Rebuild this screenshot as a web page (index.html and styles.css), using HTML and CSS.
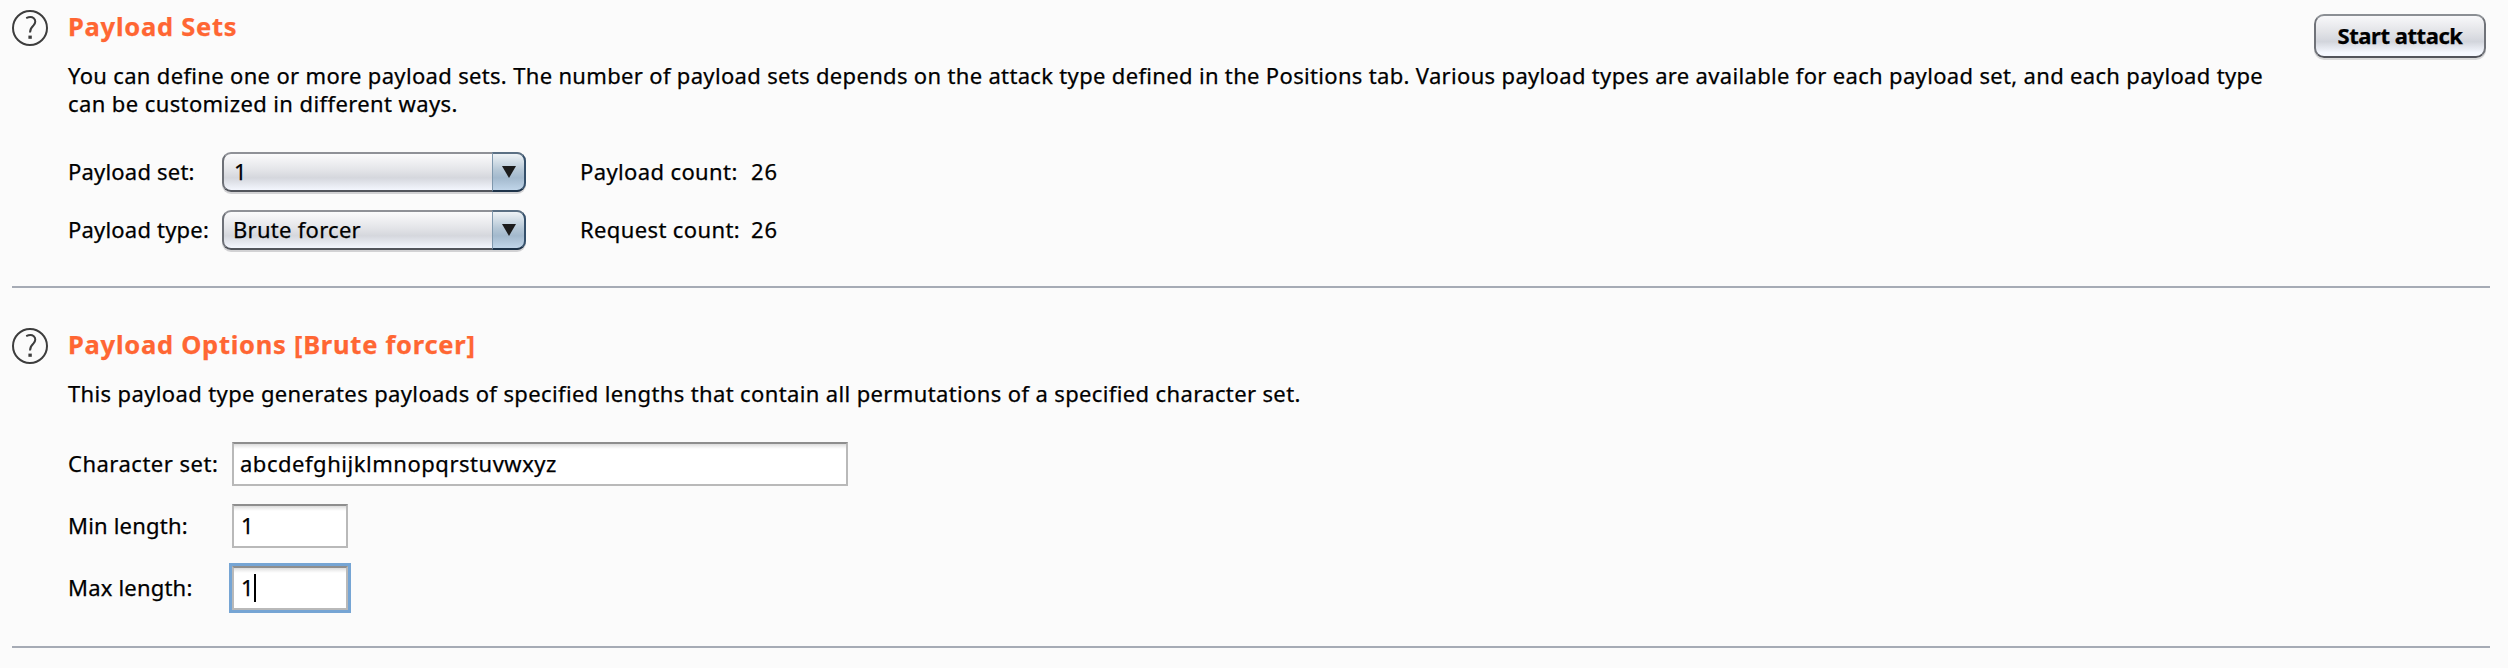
FILE: index.html
```html
<!DOCTYPE html>
<html lang="en">
<head>
<meta charset="utf-8">
<title>Payloads</title>
<link rel="stylesheet" href="styles.css">
</head>
<body>
<main class="panel">
  <section class="section">
    <svg class="help" viewBox="0 0 38 38">
      <circle cx="19" cy="19" r="17" />
      <path d="M15.2 9.2C18 7.8 21 7.8 22.8 9.2C25 11 24.6 14.3 22.6 16.3C20.4 18.4 19 19.8 19 23.6" />
      <rect x="17.4" y="26.6" width="3.4" height="3.2" />
    </svg>
    <div class="content">
      <h2 class="title">Payload Sets</h2>
      <p class="text"><span class="text-wide">You can define one or more payload sets. The number of payload sets depends on the attack type defined in the Positions tab. Various payload types are available for each payload set, and each payload type</span><br><span class="text-end">can be customized in different ways.</span></p>
      <div class="sets">
        <label class="label">Payload set:</label>
        <div class="combo"><span class="value value-digit">1</span><span class="arrow"><svg class="tri" viewBox="0 0 14 12"><path d="M0 0H14L7 12Z" /></svg></span></div>
        <span class="label count">Payload count:</span>
        <span class="label number">26</span>
        <label class="label">Payload type:</label>
        <div class="combo"><span class="value">Brute forcer</span><span class="arrow"><svg class="tri" viewBox="0 0 14 12"><path d="M0 0H14L7 12Z" /></svg></span></div>
        <span class="label count">Request count:</span>
        <span class="label number">26</span>
      </div>
    </div>
    <button class="attack">Start attack</button>
  </section>

  <section class="section">
    <svg class="help" viewBox="0 0 38 38">
      <circle cx="19" cy="19" r="17" />
      <path d="M15.2 9.2C18 7.8 21 7.8 22.8 9.2C25 11 24.6 14.3 22.6 16.3C20.4 18.4 19 19.8 19 23.6" />
      <rect x="17.4" y="26.6" width="3.4" height="3.2" />
    </svg>
    <div class="content">
      <h2 class="title">Payload Options [Brute forcer]</h2>
      <p class="text text-single">This payload type generates payloads of specified lengths that contain all permutations of a specified character set.</p>
      <div class="options">
        <label class="label label-chars">Character set:</label>
        <div class="field field-wide">abcdefghijklmnopqrstuvwxyz</div>
        <label class="label">Min length:</label>
        <div class="field">1</div>
        <label class="label">Max length:</label>
        <div class="field focused">1<i class="caret"></i></div>
      </div>
    </div>
  </section>
</main>
</body>
</html>
```
FILE: styles.css
```css
* { box-sizing: border-box; }

body {
  margin: 0;
  background: #fbfbfb;
  color: #000;
  font: 22px/28px "Noto Sans", sans-serif;
  -webkit-text-stroke-width: 0.25px;
}

.panel {
  height: 668px;
  padding: 0 18px 0 12px;
  overflow: hidden;
}

.section {
  display: flex;
  align-items: flex-start;
  height: 288px;
  padding-top: 8px;
  border-bottom: 2px solid #a6abb5;
}

.section + .section {
  height: 360px;
  padding-top: 38px;
}

.help {
  flex: none;
  width: 38px;
  height: 38px;
  margin: 1px 18px 0 -1px;
  fill: none;
  stroke: #3d3d3d;
  stroke-width: 2;
}

.help rect {
  fill: #3d3d3d;
  stroke: none;
}

.content {
  flex: 1;
  white-space: nowrap;
}

.title {
  margin: 0 0 0 1px;
  color: #ff6633;
  font-size: 25.5px;
  line-height: 36px;
  letter-spacing: 0.74px;
}

.text { margin: 17px 0 0 1px; }
.text-wide { letter-spacing: 0.33px; }
.text-end { letter-spacing: 0.4px; }
.text-single { letter-spacing: 0.37px; }

.sets {
  display: grid;
  grid-template-columns: 155px 357px 171px auto;
  grid-auto-rows: 40px;
  row-gap: 18px;
  margin-top: 35px;
}

.label {
  padding-left: 1px;
  line-height: 38px;
  letter-spacing: 0.2px;
}

.count { letter-spacing: 0.38px; }
.number { letter-spacing: 0.8px; }

.combo {
  display: flex;
  width: 304px;
  height: 40px;
  border: 2px solid;
  border-color: #8f9197 #6d7077 #52555c;
  border-right: 0;
  border-radius: 9px;
  background: linear-gradient(#fbfbfc, #e3e4e8 45%, #d5d7dd 66%, #f3f6fe);
  box-shadow: 0 2px 0 #d2d2d4;
}

.value {
  flex: 1;
  padding-left: 9px;
  line-height: 34px;
  letter-spacing: 0.28px;
}

.value-digit { padding-left: 10px; }

.arrow {
  display: flex;
  flex: none;
  align-items: center;
  justify-content: center;
  width: 34px;
  height: 40px;
  margin-top: -2px;
  border: 2px solid;
  border-color: #5b7084 #35506b #1e3349 #7f98ad;
  border-left-width: 1px;
  border-radius: 0 9px 9px 0;
  background: linear-gradient(#eef3f6, #b5c7d6 45%, #a3b9cd 66%, #c0d5e9);
}

.tri {
  width: 14px;
  height: 12px;
  fill: #1c1c1c;
}

.attack {
  width: 172px;
  height: 44px;
  margin: 6px 4px 0 0;
  padding: 0 0 2px;
  border: 2px solid;
  border-color: #8b8f94 #707379 #52545b;
  border-radius: 10px;
  background: linear-gradient(#f8f8fa, #e2e3e7 40%, #d2d5dc 64%, #f5f8ff 92%);
  box-shadow: 0 2px 0 #d9d9da;
  color: #000;
  font: bold 22px/38px "Noto Sans", sans-serif;
  letter-spacing: -0.45px;
  white-space: nowrap;
}

.options {
  display: grid;
  grid-template-columns: 165px auto;
  grid-auto-rows: 44px;
  row-gap: 18px;
  margin-top: 35px;
}

.options .label { line-height: 42px; }
.options .label-chars { letter-spacing: 0.5px; }

.field {
  display: flex;
  width: 116px;
  height: 44px;
  padding-left: 7px;
  border: 2px solid #b9b9b9;
  border-top-color: #8e8e8e;
  background: linear-gradient(#dcdcdc, #f3f3f3 3px, #fff 5px);
  line-height: 38px;
}

.field-wide {
  width: 616px;
  padding-left: 6px;
  letter-spacing: 0.53px;
}

.focused { box-shadow: 0 0 0 3px #76a5d4; }

.caret {
  width: 2px;
  height: 28px;
  margin-top: 6px;
  background: #000;
}
```
